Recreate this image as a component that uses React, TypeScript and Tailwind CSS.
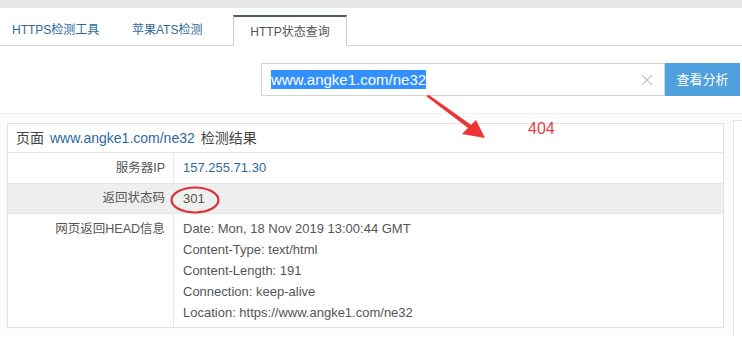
import React from "react";

const headLines = [
  "Date: Mon, 18 Nov 2019 13:00:44 GMT",
  "Content-Type: text/html",
  "Content-Length: 191",
  "Connection: keep-alive",
  "Location: https://www.angke1.com/ne32",
];

function Tabs() {
  return (
    <div className="flex h-[38px] items-end border-b border-[#d5d5d5]">
      <div className="flex h-[30px] w-[117px] items-center pl-3 text-[12px] text-[#2e6a9e]">HTTPS检测工具</div>
      <div className="flex h-[30px] w-[116px] items-center pl-[15px] text-[12px] text-[#2e6a9e]">苹果ATS检测</div>
      <div className="relative -mb-px flex h-[31px] w-[114px] items-center justify-center border-x border-t-2 border-x-[#cfcfcf] border-t-[#4d5b69] bg-white text-[12px] text-[#555]">
        HTTP状态查询
      </div>
    </div>
  );
}

function SearchBar() {
  return (
    <div className="flex h-[68px] items-start border-b border-[#f0f0f0] pt-[17px] pl-[261px]">
      <div className="flex h-[33px] w-[404px] items-center border border-[#cfd4d9] pl-[9px] pr-[11px]">
        <span className="bg-[#3390ff] text-[15px] leading-[19px] text-white">www.angke1.com/ne32</span>
        <svg className="ml-auto" width="12" height="12" viewBox="0 0 12 12">
          <path d="M1 1L11 11M11 1L1 11" stroke="#c4c4c4" strokeWidth="1.2" />
        </svg>
      </div>
      <button className="h-[33px] w-[75px] bg-[#4fa0dc] text-[13px] text-white">查看分析</button>
    </div>
  );
}

function Row({ label, children, gray }: { label: string; children: React.ReactNode; gray?: boolean }) {
  return (
    <div className={`flex items-stretch border-t border-[#e6e6e6] ${gray ? "bg-[#efefef]" : ""}`}>
      <div className="flex w-[166px] shrink-0 items-center justify-end border-r border-[#e6e6e6] pr-2 text-[12.5px] text-[#555]">
        {label}
      </div>
      <div className="flex-1 pl-[9px] text-[13px]">{children}</div>
    </div>
  );
}

export default function App() {
  return (
    <div className="relative h-[337px] w-[742px] overflow-hidden bg-white font-['Liberation_Sans','Noto_Sans_CJK_SC',sans-serif]">
      <div className="h-[8px] bg-[#e7e7e7]" />
      <Tabs />
      <SearchBar />

      <div className="flex h-[222px] bg-[#fcfcfc] pt-[9px] pl-[7px]">
        <div className="h-[205px] w-[717px] border border-[#e3e3e3] bg-white">
          <div className="flex h-[28px] items-center pl-2 text-[14px] text-[#444]">
            页面
            <span className="ml-[6px] text-[#2e6a9e]">www.angke1.com/ne32</span>
            <span className="ml-[6px]">检测结果</span>
          </div>
          <Row label="服务器IP">
            <div className="flex h-[30px] items-center text-[#2e6a9e]">157.255.71.30</div>
          </Row>
          <Row label="返回状态码" gray>
            <div className="flex h-[29px] items-center text-[#555]">301</div>
          </Row>
          <div className="flex border-t border-[#e6e6e6]">
            <div className="w-[166px] shrink-0 border-r border-[#e6e6e6] pt-[6px] pr-2 text-right text-[12.5px] text-[#555]">
              网页返回HEAD信息
            </div>
            <div className="flex-1 py-[4px] pl-[9px] text-[13px] leading-[21px] text-[#555]">
              {headLines.map((l) => (
                <div key={l}>{l}</div>
              ))}
            </div>
          </div>
        </div>
        <div className="mt-[-3px] ml-[9px] flex-1 border-l border-t border-[#e6e6e6] bg-white" />
      </div>

      {/* annotations */}
      <svg className="absolute top-0 left-0" width="742" height="337">
        <ellipse cx="195" cy="200" rx="23.5" ry="12.5" fill="none" stroke="#d9343a" strokeWidth="2.2" />
        <polygon points="426,96 429,95 474,127 472,131" fill="#ee3333" />
        <polygon points="485,138 462,134 476,120" fill="#ee3333" />
      </svg>
      <div className="absolute top-[117px] left-[528px] text-[16px] text-[#e0403f]">404</div>
    </div>
  );
}
